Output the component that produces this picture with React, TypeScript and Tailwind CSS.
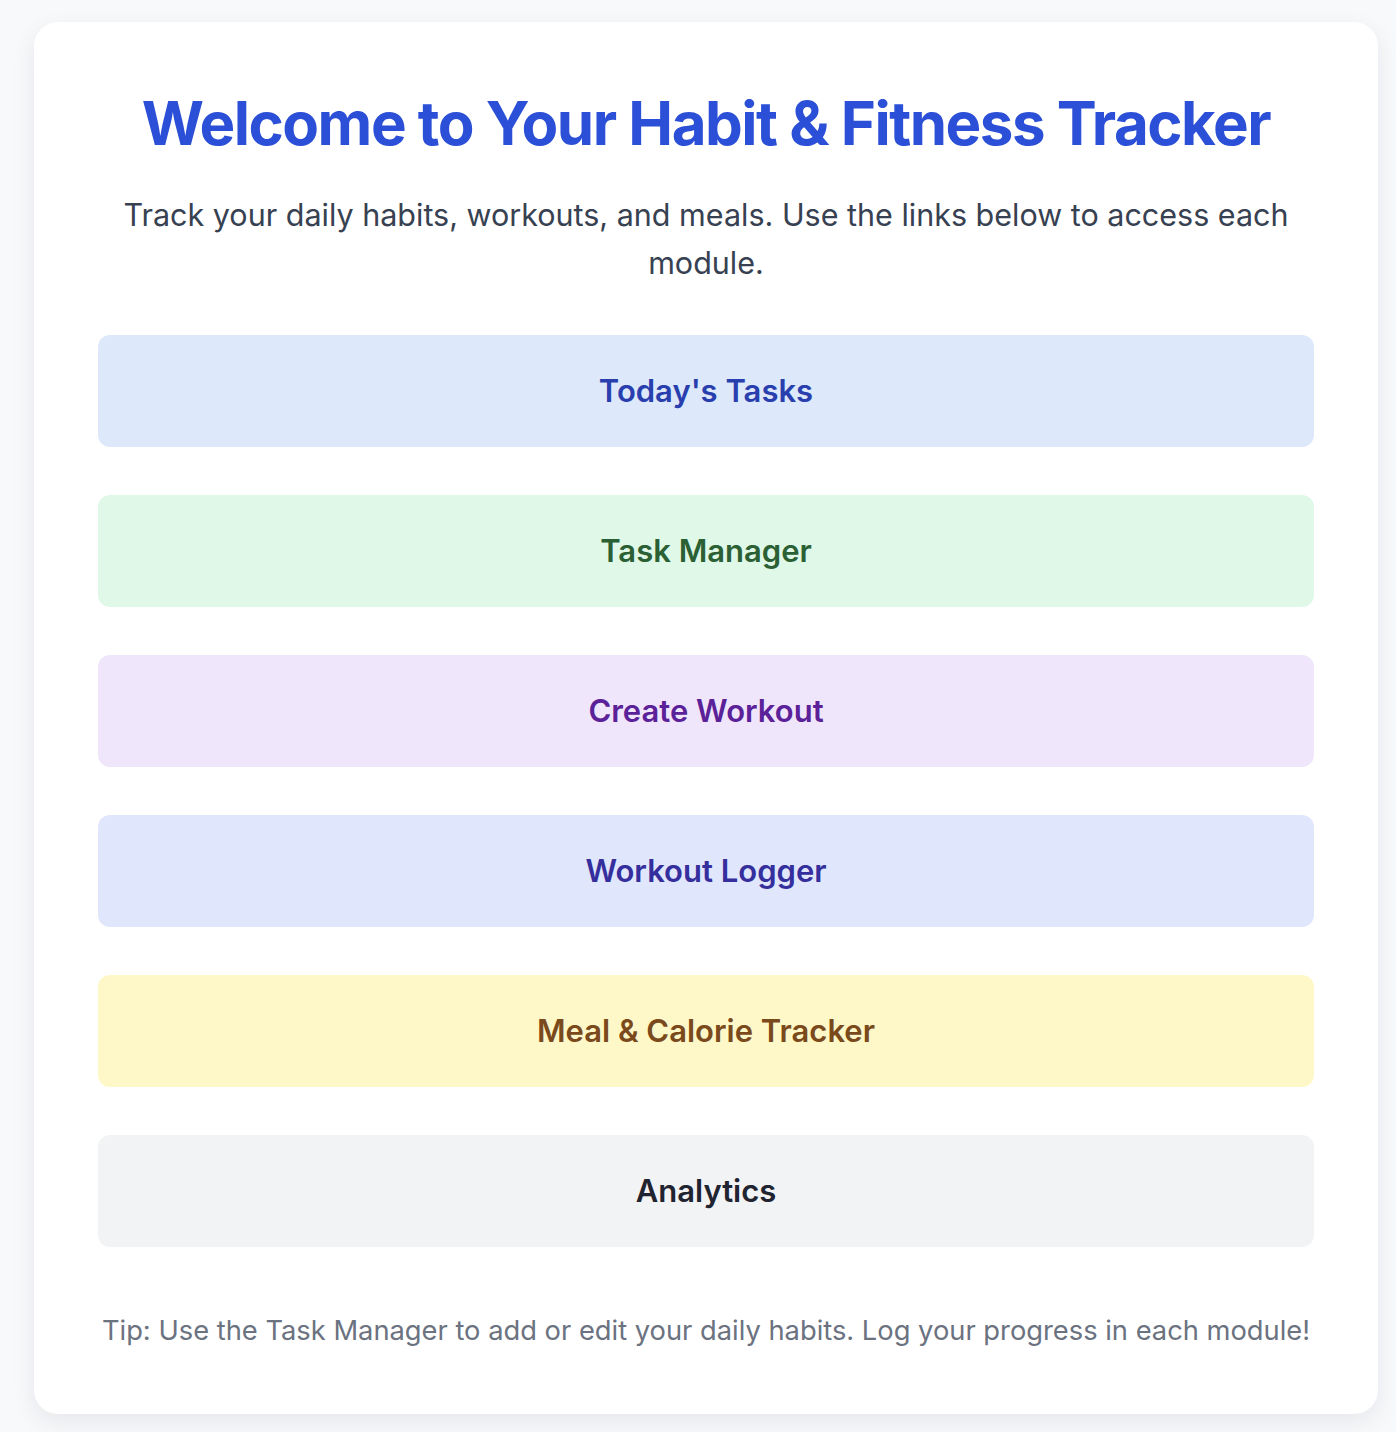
// Landing page for the habit & fitness tracker: a single card with a
// heading, a short intro and one coloured link per module.

const MODULES: Array<{ label: string; className: string }> = [
  { label: "Today's Tasks", className: "bg-[#dde8fb] text-[#2a3fae]" },
  { label: "Task Manager", className: "bg-[#dff8e7] text-[#2b5f34]" },
  { label: "Create Workout", className: "bg-[#f0e6fb] text-[#5b2199]" },
  { label: "Workout Logger", className: "bg-[#e0e6fc] text-[#352e9d]" },
  { label: "Meal & Calorie Tracker", className: "bg-[#fef8c8] text-[#7a4a1c]" },
  { label: "Analytics", className: "bg-[#f2f3f5] text-[#1f2430]" },
];

export default function App() {
  return (
    <div className="min-h-screen bg-[#f8f9fb] pt-[22px] pr-[18px] pb-[16px] pl-[34px] font-['Inter','Liberation_Sans',sans-serif]">
      <div className="rounded-3xl bg-white px-16 pt-[65px] pb-16 shadow-[0_8px_24px_rgba(15,23,42,0.08)]">
        <h1 className="text-center text-[60px] leading-[72px] font-bold tracking-[-0.025em] text-[#2b4fd6]">
          Welcome to Your Habit &amp; Fitness Tracker
        </h1>
        <p className="mx-auto mt-8 max-w-[1190px] text-center text-[30.5px] leading-[48px] text-[#374151]">
          Track your daily habits, workouts, and meals. Use the links below to
          access each module.
        </p>

        {/* Modules */}
        <div className="mt-12 flex flex-col gap-12">
          {MODULES.map((m) => (
            <a
              key={m.label}
              href="#"
              className={`block rounded-xl py-8 text-center text-[31px] leading-[48px] font-semibold ${m.className}`}
            >
              {m.label}
            </a>
          ))}
        </div>

        <p className="mt-16 text-center text-[27.3px] leading-[39px] text-[#6b7280]">
          Tip: Use the Task Manager to add or edit your daily habits. Log your
          progress in each module!
        </p>
      </div>
    </div>
  );
}
